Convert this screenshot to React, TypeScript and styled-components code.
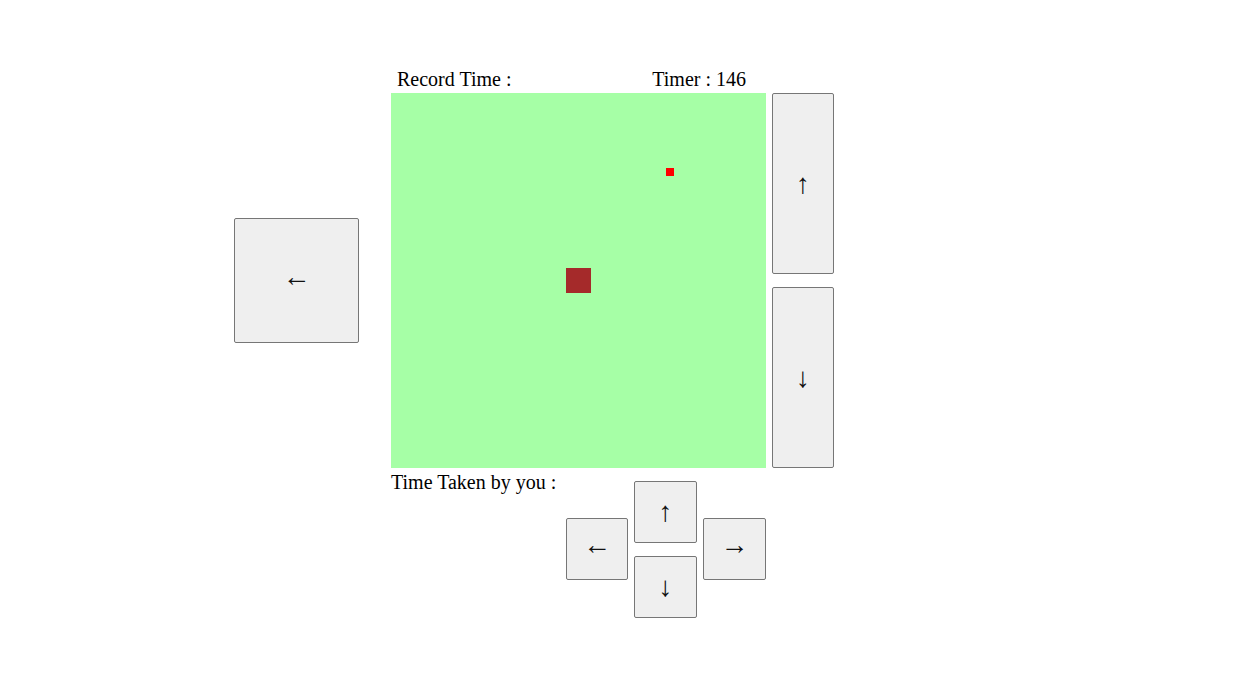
import React from "react";
import styled, { createGlobalStyle } from "styled-components";

const Global = createGlobalStyle`
  html, body { margin: 0; padding: 0; background: #fff; }
  body { font-family: "Liberation Serif", "Times New Roman", serif; color: #000; }
`;

const Page = styled.div`
  padding: 70px 0 0 234px;
  display: flex;
  flex-direction: column;
`;

const Header = styled.div`
  margin-left: 157px;
  width: 375px;
  box-sizing: border-box;
  padding: 0 20px 0 6px;
  display: flex;
  justify-content: space-between;
  align-items: flex-start;
  font-size: 20px;
  line-height: 19px;
  height: 23px;
`;

const MainRow = styled.div`
  display: flex;
  align-items: center;
`;

const Button = styled.button<{ $w: number; $h: number; $horiz?: boolean }>`
  width: ${(p) => p.$w}px;
  height: ${(p) => p.$h}px;
  box-sizing: border-box;
  border: 1px solid #767676;
  border-radius: 2px;
  background: #efefef;
  font-family: "Liberation Serif", "DejaVu Serif", serif;
  font-size: 28px;
  line-height: 1;
  color: #111;
  padding: 0 0 ${(p) => (p.$horiz ? 8 : 0)}px 0;
  display: flex;
  align-items: center;
  justify-content: center;
`;

const Board = styled.div`
  position: relative;
  width: 375px;
  height: 375px;
  background: #a6ffa6;
  margin-left: 32px;
`;

const Cell = styled.div<{ $size: number; $color: string }>`
  position: absolute;
  width: ${(p) => p.$size}px;
  height: ${(p) => p.$size}px;
  background: ${(p) => p.$color};
`;

const SideCol = styled.div`
  display: flex;
  flex-direction: column;
  gap: 13px;
  margin-left: 6px;
`;

const BottomRow = styled.div`
  margin-left: 157px;
  width: 375px;
  display: flex;
  justify-content: space-between;
  align-items: flex-start;
`;

const TimeTaken = styled.div`
  font-size: 20px;
  line-height: 23px;
  margin-top: 3px;
`;

const Pad = styled.div`
  margin-top: 13px;
  display: grid;
  grid-template-columns: 62px 63px 63px;
  grid-template-rows: 37px 25px 37px 38px;
  column-gap: 6px;
`;

const PadCell = styled.div<{ $col: number; $row: string }>`
  grid-column: ${(p) => p.$col};
  grid-row: ${(p) => p.$row};
`;

export default function App() {
  return (
    <>
      <Global />
      <Page>
        <Header>
          <span>Record Time :</span>
          <span>Timer : 146</span>
        </Header>
        <MainRow>
          <Button $w={125} $h={125} $horiz>←</Button>
          <Board>
            <Cell $size={25} $color="#a52a2a" style={{ left: 175, top: 175 }} />
            <Cell $size={8} $color="#ff0000" style={{ left: 275, top: 75 }} />
          </Board>
          <SideCol>
            <Button $w={62} $h={181}>↑</Button>
            <Button $w={62} $h={181}>↓</Button>
          </SideCol>
        </MainRow>
        <BottomRow>
          <TimeTaken>Time Taken by you :</TimeTaken>
          <Pad>
            <PadCell $col={2} $row="1 / 3">
              <Button $w={63} $h={62}>↑</Button>
            </PadCell>
            <PadCell $col={1} $row="2 / 4">
              <Button $w={62} $h={62} $horiz>←</Button>
            </PadCell>
            <PadCell $col={3} $row="2 / 4">
              <Button $w={63} $h={62} $horiz>→</Button>
            </PadCell>
            <PadCell $col={2} $row="3 / 5">
              <Button $w={63} $h={62} style={{ marginTop: 13 }}>↓</Button>
            </PadCell>
          </Pad>
        </BottomRow>
      </Page>
    </>
  );
}
